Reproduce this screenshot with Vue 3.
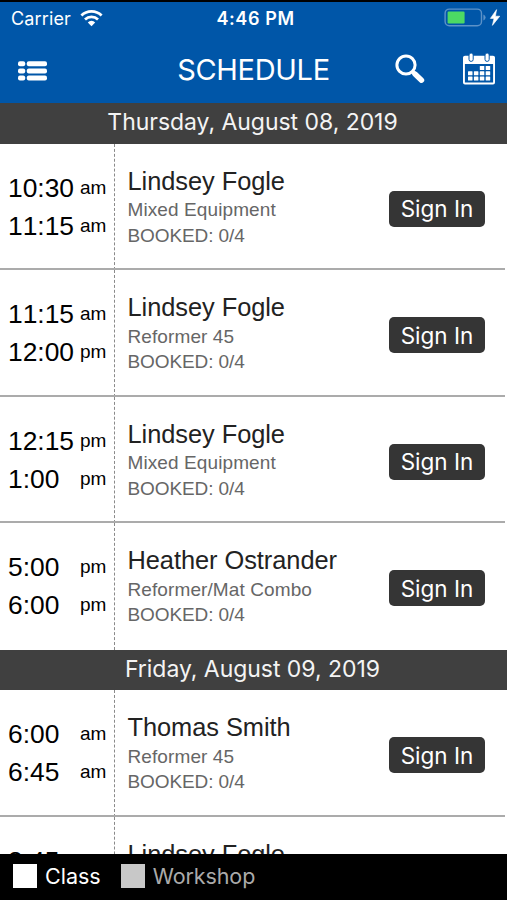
<template>
  <div class="screen">
    <header class="top">
      <div class="status-bar">
        <div class="status-left">
          <span class="carrier">Carrier</span>
          <svg class="wifi" width="23" height="17" viewBox="0 0 23 17">
            <path d="M1.4 5.6A14.4 14.4 0 0 1 21.6 5.6" fill="none" stroke="#fff" stroke-width="2.8" />
            <path d="M5 9.5A9.2 9.2 0 0 1 18 9.5" fill="none" stroke="#fff" stroke-width="2.7" />
            <path d="M7.8 12.4A5.2 5.2 0 0 1 15.2 12.4L11.5 16.2Z" fill="#fff" />
          </svg>
        </div>
        <span class="clock">4:46 PM</span>
        <div class="status-right">
          <svg width="56" height="20" viewBox="0 0 56 20">
            <rect x="1.1" y="1.1" width="36.4" height="16.6" rx="4.2" fill="none" stroke="#5c92c8" stroke-width="1.4" />
            <rect x="3.6" y="3.6" width="17" height="11.8" rx="1.2" fill="#4cd964" />
            <path d="M39.4 6.4Q41.6 7.4 41.6 9.4Q41.6 11.4 39.4 12.4Z" fill="#5c92c8" />
            <path d="M52.6 1.6L46.4 10.4H50L48.4 17.4L55.8 8.2H51.4Z" fill="#fff" stroke="#fff" stroke-width="0.6" />
          </svg>
        </div>
      </div>
      <nav class="nav-bar">
        <button class="icon-button" aria-label="Menu">
          <svg class="menu-icon" width="29" height="20" viewBox="0 0 29 20">
            <g v-for="y in [0.3, 7.4, 14.6]" :key="y" fill="#fff">
              <rect x="0" :y="y" width="7.2" height="5" rx="2" />
              <rect x="8.8" :y="y" width="20.2" height="5" rx="2" />
            </g>
          </svg>
        </button>
        <h1 class="title">SCHEDULE</h1>
        <div class="actions">
          <button class="icon-button" aria-label="Search">
            <svg width="30" height="30" viewBox="0 0 30 30" fill="none" stroke="#fff">
              <circle cx="11" cy="11" r="9.1" stroke-width="3" />
              <path d="M17 17L20 20" stroke-width="4" />
              <path d="M20 20L26.5 26.2" stroke-width="5.4" stroke-linecap="round" />
            </svg>
          </button>
          <button class="icon-button" aria-label="Calendar">
            <svg class="calendar-icon" width="32" height="32" viewBox="0 0 32 32">
              <path d="M0 4.5Q0 2.8 2 2.8H30Q32 2.8 32 4.5V29.5Q32 31.5 30 31.5H2Q0 31.5 0 29.5ZM1.9 11V29.6H30.1V11Z" fill="#fff" fill-rule="evenodd" />
              <rect v-for="x in [6, 22]" :key="x" :x="x" y="0" width="4.2" height="8.4" rx="2" fill="#fff" stroke="#0056a8" stroke-width="1" />
              <rect v-for="(cell, i) in calendarCells" :key="i" :x="cell.x" :y="cell.y" width="4.5" height="4" rx="0.5" fill="#fff" />
            </svg>
          </button>
        </div>
      </nav>
    </header>

    <main class="list">
      <section v-for="day in days" :key="day.date">
        <h2 class="day-header">{{ day.date }}</h2>
        <article v-for="(item, index) in day.classes" :key="index" class="row">
          <div class="times">
            <div v-for="slot in [item.start, item.end]" :key="slot" class="time">
              <span>{{ slot.split(' ')[0] }}</span>
              <span class="meridiem">{{ slot.split(' ')[1] }}</span>
            </div>
          </div>
          <div class="details">
            <div class="instructor">{{ item.instructor }}</div>
            <div class="meta type">{{ item.type }}</div>
            <div class="meta booked">BOOKED: 0/4</div>
          </div>
          <button class="sign-in">Sign In</button>
        </article>
      </section>
    </main>

    <footer class="legend">
      <div class="legend-item">
        <span class="swatch"></span>
        <span>Class</span>
      </div>
      <div class="legend-item workshop">
        <span class="swatch"></span>
        <span>Workshop</span>
      </div>
    </footer>
  </div>
</template>

<script setup>
const days = [
  {
    date: 'Thursday, August 08, 2019',
    classes: [
      { start: '10:30 am', end: '11:15 am', instructor: 'Lindsey Fogle', type: 'Mixed Equipment' },
      { start: '11:15 am', end: '12:00 pm', instructor: 'Lindsey Fogle', type: 'Reformer 45' },
      { start: '12:15 pm', end: '1:00 pm', instructor: 'Lindsey Fogle', type: 'Mixed Equipment' },
      { start: '5:00 pm', end: '6:00 pm', instructor: 'Heather Ostrander', type: 'Reformer/Mat Combo' },
    ],
  },
  {
    date: 'Friday, August 09, 2019',
    classes: [
      { start: '6:00 am', end: '6:45 am', instructor: 'Thomas Smith', type: 'Reformer 45' },
      { start: '8:45 am', end: '9:30 am', instructor: 'Lindsey Fogle', type: 'Mixed Equipment' },
    ],
  },
]

// First calendar line only has its last two days
const calendarCells = [
  [2, 0], [3, 0],
  [0, 1], [1, 1], [2, 1], [3, 1],
  [0, 2], [1, 2], [2, 2], [3, 2],
].map(([col, line]) => ({ x: 5 + col * 5.9, y: 13 + line * 5.3 }))
</script>

<style>
body {
  margin: 0;
  background: #000;
}
</style>

<style scoped>
.screen {
  width: 507px;
  height: 900px;
  box-sizing: border-box;
  border-top: 2px solid #000;
  display: flex;
  flex-direction: column;
  overflow: hidden;
  background: #fff;
  font-family: Inter, sans-serif;
}

button {
  border: 0;
  padding: 0;
  background: none;
  font: inherit;
  color: inherit;
}

h1,
h2 {
  margin: 0;
  font-weight: 400;
}

svg {
  display: block;
}

.top {
  flex: none;
  height: 101px;
  background: #0056a8;
  color: #fff;
}

.status-bar {
  height: 32px;
  display: grid;
  grid-template-columns: 1fr auto 1fr;
  align-items: center;
  padding: 0 7px 0 11px;
  font-size: 18px;
}

.status-left {
  display: flex;
  align-items: center;
  gap: 9px;
}

.carrier {
  letter-spacing: 0.15px;
}

.clock {
  font-weight: 600;
  letter-spacing: 0.6px;
}

.status-right {
  display: flex;
  justify-content: flex-end;
}

.nav-bar {
  height: 69px;
  display: grid;
  grid-template-columns: 1fr auto 1fr;
  align-items: center;
  padding: 0 12px 0 18px;
}

.menu-icon {
  margin-top: 4px;
}

.title {
  margin: 3px 6px 0 0;
  font-size: 29px;
  line-height: 36px;
  letter-spacing: -0.3px;
}

.actions {
  display: flex;
  justify-content: flex-end;
  align-items: center;
  gap: 38px;
}

.calendar-icon {
  overflow: visible;
}

.list {
  flex: 1;
  min-height: 0;
  overflow: hidden;
}

.day-header {
  height: 40.5px;
  padding-right: 2px;
  background: #404040;
  color: #f4f4f4;
  font-size: 23px;
  line-height: 39px;
  letter-spacing: -0.04px;
  text-align: center;
}

.row {
  height: 126.5px;
  box-sizing: border-box;
  display: flex;
  align-items: flex-start;
  position: relative;
  font-family: "Liberation Sans", sans-serif;
}

.row:not(:last-child)::after {
  content: '';
  position: absolute;
  left: 0;
  right: 2px;
  bottom: 0;
  height: 2px;
  background: #ababab;
}

.times {
  flex: none;
  width: 114.5px;
  height: 100%;
  box-sizing: border-box;
  padding: 25.4px 0 0 8px;
  border-right: 1px dashed #8a8a8a;
  color: #000;
}

.time {
  height: 38px;
  display: grid;
  grid-template-columns: 72px auto;
  font-size: 26.4px;
  line-height: 38px;
  font-kerning: none;
}

.meridiem {
  font-size: 19px;
  line-height: 38px;
}

.details {
  flex: 1;
  padding: 22px 0 0 13px;
}

.instructor {
  font-size: 25.4px;
  line-height: 31px;
  letter-spacing: -0.05px;
  color: #222;
}

.meta {
  font-size: 19px;
  line-height: 25.5px;
  color: #666;
}

.type {
  margin-top: 0.5px;
  letter-spacing: 0.1px;
}

.booked {
  letter-spacing: -0.1px;
}

.sign-in {
  width: 96px;
  height: 36px;
  margin: 47px 22px 0 0;
  border-radius: 5px;
  background: #353535;
  color: #fff;
  font-family: Inter, sans-serif;
  font-size: 22.5px;
}

.legend {
  flex: none;
  height: 46.5px;
  box-sizing: border-box;
  display: flex;
  align-items: center;
  gap: 20px;
  padding: 0 0 1px 13px;
  background: #000;
  color: #fff;
  font-size: 21.5px;
}

.legend-item {
  display: flex;
  align-items: center;
  gap: 8px;
}

.swatch {
  width: 24px;
  height: 24px;
  background: #fff;
}

.workshop {
  color: #aaa;
  letter-spacing: -0.1px;
}

.workshop .swatch {
  background: #c8c8c8;
}
</style>
